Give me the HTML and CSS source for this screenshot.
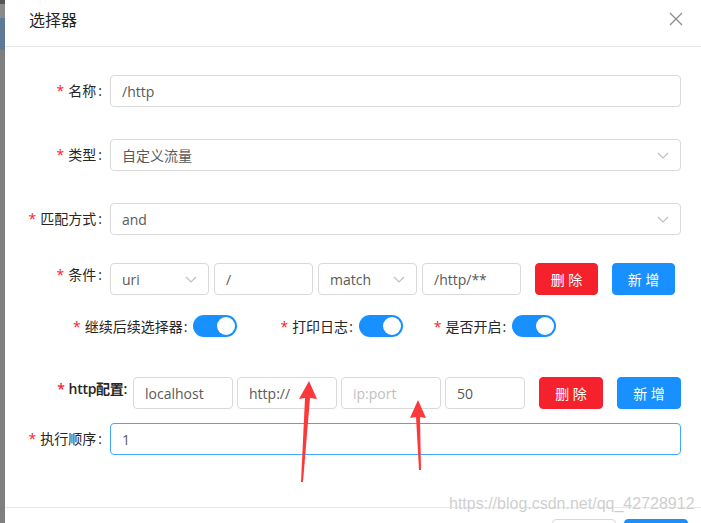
FILE: index.html
```html
<!DOCTYPE html>
<html lang="zh-CN">
<head>
  <meta charset="UTF-8" />
  <meta name="viewport" content="width=device-width, initial-scale=1.0" />
  <title>选择器</title>
  <link rel="stylesheet" href="styles.css">
</head>
<body>
  <div class="modal">
    <div class="modal-header">
      <span class="modal-title">选择器</span>
      <svg class="modal-close" width="14" height="14" viewBox="0 0 14 14">
        <path d="M1 1 L13 13 M13 1 L1 13" stroke="#8c8c8c" stroke-width="1.3" fill="none" />
      </svg>
    </div>

    <div class="modal-body">
      <div class="form-row row-name">
        <label class="form-label required">名称</label>
        <div class="form-control"><input class="input" value="/http" /></div>
      </div>

      <div class="form-row row-type">
        <label class="form-label required">类型</label>
        <div class="form-control">
          <div class="select"><span>自定义流量</span><svg class="arrow" width="12" height="7" viewBox="0 0 12 7"><path d="M1 1 L6 6 L11 1" stroke="#bfbfbf" stroke-width="1.1" fill="none" /></svg></div>
        </div>
      </div>

      <div class="form-row row-match">
        <label class="form-label required">匹配方式</label>
        <div class="form-control">
          <div class="select"><span>and</span><svg class="arrow" width="12" height="7" viewBox="0 0 12 7"><path d="M1 1 L6 6 L11 1" stroke="#bfbfbf" stroke-width="1.1" fill="none" /></svg></div>
        </div>
      </div>

      <div class="form-row row-cond align-top">
        <label class="form-label required">条件</label>
        <div class="form-control inline-group">
          <div class="select w99"><span>uri</span><svg class="arrow" width="12" height="7" viewBox="0 0 12 7"><path d="M1 1 L6 6 L11 1" stroke="#bfbfbf" stroke-width="1.1" fill="none" /></svg></div>
          <input class="input w99" value="/" />
          <div class="select w99"><span>match</span><svg class="arrow" width="12" height="7" viewBox="0 0 12 7"><path d="M1 1 L6 6 L11 1" stroke="#bfbfbf" stroke-width="1.1" fill="none" /></svg></div>
          <input class="input w99" value="/http/**" />
          <button class="btn btn-danger first-btn">删 除</button>
          <button class="btn btn-primary">新 增</button>
        </div>
      </div>

      <div class="switch-row">
        <div class="switch-item">
          <span class="form-label required">继续后续选择器</span>
          <span class="switch"></span>
        </div>
        <div class="switch-item">
          <span class="form-label required">打印日志</span>
          <span class="switch"></span>
        </div>
        <div class="switch-item">
          <span class="form-label required">是否开启</span>
          <span class="switch"></span>
        </div>
      </div>

      <div class="form-row row-http align-top">
        <label class="form-label required http-label">http配置</label>
        <div class="form-control inline-group">
          <input class="input w100" value="localhost" />
          <input class="input w100" value="http://" />
          <input class="input w100" placeholder="ip:port" />
          <input class="input w80" value="50" />
          <button class="btn btn-danger first-btn">删 除</button>
          <button class="btn btn-primary">新 增</button>
        </div>
      </div>

      <div class="form-row row-order">
        <label class="form-label required">执行顺序</label>
        <div class="form-control"><input class="input focused" value="1" /></div>
      </div>
    </div>

    <!-- footer is cut off by the window, only the top of the buttons shows -->
    <div class="modal-footer">
      <span class="btn btn-default"></span>
      <span class="btn btn-primary"></span>
    </div>
  </div>

  <!-- arrows drawn on top of the screenshot -->
  <svg class="marks" width="701" height="523" viewBox="0 0 701 523">
    <polygon points="309,381 317,399 310,398 303,482 301,482 305,398 299,399" fill="#fa3a3a" />
    <polygon points="418,400 426,418 420,417 421,470 419,470 416,417 410,418" fill="#fa3a3a" />
  </svg>
  <div class="watermark">https://blog.csdn.net/qq_42728912</div>
</body>
</html>
```

FILE: styles.css
```css
body {
  margin: 0;
  padding: 0;
  font-family: "Open Sans", "Noto Sans CJK SC", sans-serif;
  font-size: 14px;
  color: #595959;
  background: linear-gradient(to bottom, #555 0, #555 4px, #8a8a8a 4px, #8a8a8a 18px, #5d7b98 18px, #5d7b98 50px, #7f7f7f 50px);
  overflow: hidden;
  height: 523px;
}

.modal {
  margin-left: 5px;
  height: 523px;
  background: #fff;
}

.modal-header {
  box-sizing: border-box;
  height: 47px;
  border-bottom: 1px solid #e8e8e8;
  display: flex;
  align-items: center;
  justify-content: space-between;
  padding: 0 18px 0 24px;
}

.modal-title {
  font-size: 16px;
  color: #262626;
  margin-top: -8px;
}

.modal-close {
  margin-top: -8px;
}

.modal-body {
  padding: 28px 20px 52px 0;
}

.form-row {
  display: flex;
  align-items: center;
  height: 32px;
}

.row-name,
.row-type {
  margin-bottom: 32px;
}

.row-match {
  margin-bottom: 28px;
}

.row-cond {
  margin-bottom: 20px;
}

.row-http {
  margin-bottom: 14px;
}

.form-row.align-top {
  align-items: flex-start;
}

.form-label {
  color: #262626;
  white-space: nowrap;
}

.form-row .form-label {
  width: 105px;
  flex: none;
  text-align: right;
  line-height: 32px;
}

.form-row.align-top .form-label {
  line-height: 24px;
}

.form-label::after {
  content: ":";
  margin: 0 8px 0 2px;
}

.required::before {
  content: "*";
  color: #f5222d;
  margin-right: 4px;
}

.row-http .form-label {
  width: 128px;
  font-weight: 600;
  line-height: 22px;
  letter-spacing: -0.3px;
}

.row-http .form-label::after {
  margin: 0 6px 0 0;
}

.form-control {
  flex: 1;
}

.inline-group {
  display: flex;
  gap: 5px;
}

.row-http .inline-group {
  gap: 4px;
}

.input,
.select {
  box-sizing: border-box;
  height: 32px;
  width: 100%;
  border: 1px solid #d9d9d9;
  border-radius: 4px;
  padding: 4px 11px;
  font-family: inherit;
  font-size: 14px;
  color: #595959;
  background: #fff;
  outline: none;
}

.input::placeholder {
  color: #bfbfbf;
}

.input.focused {
  border-color: #40a9ff;
}

.select {
  display: flex;
  align-items: center;
  justify-content: space-between;
}

.w99 {
  width: 99px;
  flex: none;
}

.w100 {
  width: 100px;
  flex: none;
}

.w80 {
  width: 80px;
  flex: none;
}

.btn {
  box-sizing: border-box;
  display: inline-block;
  height: 32px;
  width: 64px;
  border: 1px solid transparent;
  border-radius: 4px;
  font-family: inherit;
  font-size: 14px;
  color: #fff;
  padding: 0;
  flex: none;
}

.btn-danger {
  background: #f5222d;
  border-color: #f5222d;
}

.btn-primary {
  background: #1890ff;
  border-color: #1890ff;
}

.btn-default {
  background: #fff;
  border-color: #d9d9d9;
}

.inline-group .btn {
  margin-left: 9px;
}

.row-http .inline-group .btn {
  margin-left: 10px;
}

.row-cond .btn {
  width: 63px;
}

.switch-row {
  display: flex;
  align-items: center;
  padding-left: 68px;
  margin-bottom: 40px;
  height: 22px;
}

.switch-item {
  display: flex;
  align-items: center;
}

.switch-item + .switch-item {
  margin-left: 43px;
}

.switch-item:last-child {
  margin-left: 31px;
}

.switch-item .form-label::after {
  margin: 0 6px 0 1px;
}

.switch {
  position: relative;
  display: inline-block;
  width: 44px;
  height: 22px;
  border-radius: 11px;
  background: #1890ff;
}

.switch::after {
  content: "";
  position: absolute;
  top: 2px;
  right: 2px;
  width: 18px;
  height: 18px;
  border-radius: 50%;
  background: #fff;
}

.modal-footer {
  border-top: 1px solid #e8e8e8;
  padding: 11px 13px 0 0;
  display: flex;
  justify-content: flex-end;
  gap: 8px;
}

.marks {
  position: absolute;
  top: 0;
  left: 0;
  pointer-events: none;
}

.watermark {
  position: absolute;
  left: 449px;
  top: 495px;
  font-family: "Liberation Sans", sans-serif;
  font-size: 16px;
  color: rgba(190, 190, 190, 0.75);
  text-shadow: 0 0 1px #fff;
}
```
